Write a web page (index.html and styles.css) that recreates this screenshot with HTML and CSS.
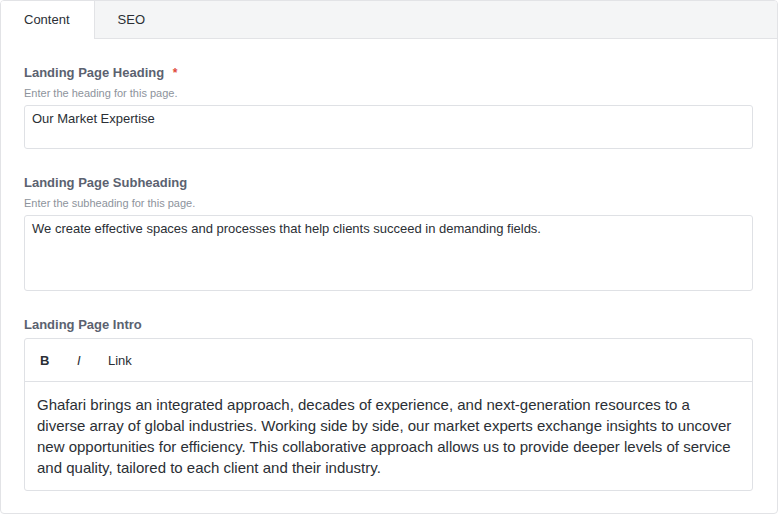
FILE: index.html
```html
<!DOCTYPE html>
<html>
<head>
<meta charset="utf-8">
<link rel="stylesheet" href="styles.css">
</head>
<body>
<div class="panel">
  <div class="tabs">
    <div class="tab active">Content</div>
    <div class="tab">SEO</div>
  </div>
  <div class="form">
    <div class="field">
      <div class="label">Landing Page Heading <span class="req">*</span></div>
      <div class="hint">Enter the heading for this page.</div>
      <div class="input">Our Market Expertise</div>
    </div>
    <div class="field">
      <div class="label">Landing Page Subheading</div>
      <div class="hint">Enter the subheading for this page.</div>
      <div class="input textarea">We create effective spaces and processes that help clients succeed in demanding fields.</div>
    </div>
    <div class="field">
      <div class="label">Landing Page Intro</div>
      <div class="editor">
        <div class="toolbar">
          <span class="btn bold">B</span>
          <span class="btn ital">I</span>
          <span class="btn link">Link</span>
        </div>
        <div class="body">Ghafari brings an integrated approach, decades of experience, and next-generation resources to a diverse array of global industries. Working side by side, our market experts exchange insights to uncover new opportunities for efficiency. This collaborative approach allows us to provide deeper levels of service and quality, tailored to each client and their industry.</div>
      </div>
    </div>
  </div>
</div>
</body>
</html>
```
FILE: styles.css
```css
* { box-sizing: border-box; }
html, body { margin: 0; padding: 0; background: #fff; }
body { font-family: "Liberation Sans", Arial, sans-serif; color: #2b2f35; width: 778px; height: 515px; overflow: hidden; }
.panel { width: 778px; height: 514px; border: 1px solid #e2e3e6; border-radius: 4px; overflow: hidden; }
.tabs { display: flex; height: 38px; background: #f4f5f6; border-bottom: 1px solid #e2e3e6; }
.tab { padding: 0 24px 0 23px; font-size: 13px; line-height: 37px; color: #2b2f35; }
.tab.active { background: #fff; border-right: 1px solid #e2e3e6; height: 38px; margin-bottom: -1px; }
.form { padding: 26px 24px 0 23px; display: flex; flex-direction: column; gap: 26px; }
.field { display: flex; flex-direction: column; }
.label { font-size: 13px; font-weight: bold; line-height: 16px; color: #5b6270; }
.req { color: #e04b3c; font-size: 12px; margin-left: 5px; }
.hint { font-size: 11px; line-height: 14px; color: #8d939c; margin-top: 5px; }
.input { margin-top: 5px; height: 44px; border: 1px solid #dfe1e5; border-radius: 3px; padding: 5px 7px; font-size: 13px; line-height: 16px; color: #2b2f35; }
.textarea { height: 76px; }
.editor { margin-top: 5px; border: 1px solid #dfe1e5; border-radius: 3px; }
.toolbar { height: 43px; border-bottom: 1px solid #dfe1e5; display: flex; align-items: center; padding-left: 15px; font-size: 13px; color: #2b2f35; }
.btn { display: inline-block; }
.bold { font-weight: bold; width: 37px; }
.ital { font-style: italic; width: 31px; }
.body { padding: 12px 12px 12px 12px; font-size: 15px; line-height: 21px; color: #2b2f35; }
```
